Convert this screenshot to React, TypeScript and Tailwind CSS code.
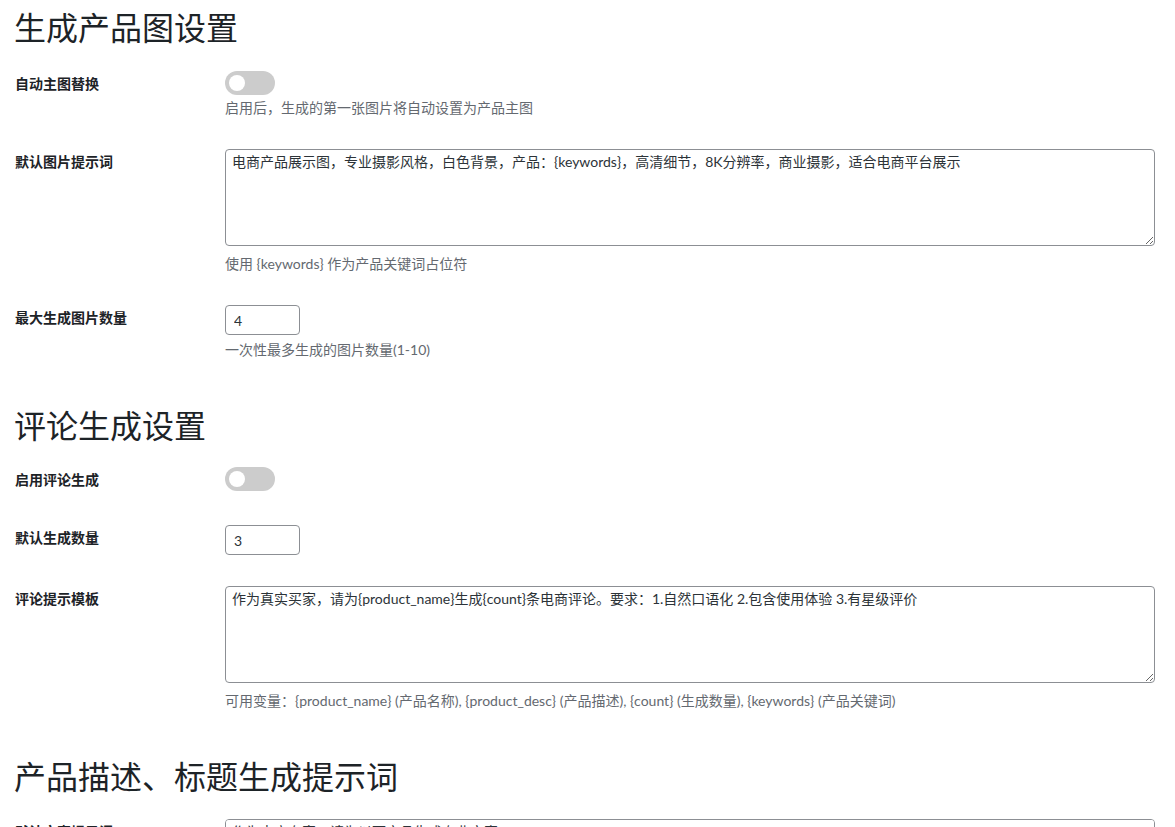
import React from "react";

const font = { fontFamily: 'Lato, "Noto Sans CJK SC", sans-serif' };

function Toggle() {
  return (
    <span className="relative inline-block w-[50px] h-[24px] rounded-full bg-[#cccccc]">
      <span className="absolute left-[4px] top-[4px] w-[16px] h-[16px] rounded-full bg-white" />
    </span>
  );
}

function Row({ label, children, desc, descGap = "mt-[4px]" }: { label: string; children: React.ReactNode; desc?: string; descGap?: string }) {
  return (
    <div className="flex">
      <div className="w-[210px] shrink-0 pt-[20px] pb-[20px] text-[14px] leading-[18px] font-semibold text-[#1d2327]">{label}</div>
      <div className="flex-1 py-[15px]">
        <div className="flex pt-[1px]">{children}</div>
        {desc && <p className={`${descGap} text-[14px] leading-[20px] text-[#646970]`}>{desc}</p>}
      </div>
    </div>
  );
}

function Area({ value, scroll }: { value: string; scroll?: boolean }) {
  return (
    <textarea
      defaultValue={value}
      className={`w-full h-[97px] border border-[#8c8f94] rounded-[4px] px-[6px] py-[2px] text-[14px] leading-[20px] text-[#2c3338] bg-white outline-none ${scroll ? "overflow-y-scroll" : ""}`}
      style={font}
    />
  );
}

function NumInput({ value }: { value: string }) {
  return (
    <input
      type="text"
      defaultValue={value}
      className="w-[75px] h-[30px] border border-[#8c8f94] rounded-[4px] px-[8px] text-[14px] text-[#2c3338] bg-white outline-none"
      style={font}
    />
  );
}

export default function App() {
  return (
    <div className="bg-white min-h-screen pl-[15px] pr-[20px] text-[#3c434a]" style={font}>
      <h2 className="pt-[7px] mb-[6px] text-[32px] leading-[42px] font-normal text-[#1d2327] -ml-[1px]">生成产品图设置</h2>
      <Row label="自动主图替换" desc="启用后，生成的第一张图片将自动设置为产品主图" descGap="mt-[3px]">
        <Toggle />
      </Row>
      <Row label="默认图片提示词" desc="使用 {keywords} 作为产品关键词占位符" descGap="mt-[8px]">
        <Area value="电商产品展示图，专业摄影风格，白色背景，产品：{keywords}，高清细节，8K分辨率，商业摄影，适合电商平台展示" />
      </Row>
      <Row label="最大生成图片数量" desc="一次性最多生成的图片数量(1-10)" descGap="mt-[5px]">
        <NumInput value="4" />
      </Row>

      <h2 className="mt-[30px] mb-[4px] text-[32px] leading-[42px] font-normal text-[#1d2327] -ml-[1px]">评论生成设置</h2>
      <Row label="启用评论生成">
        <Toggle />
      </Row>
      <Row label="默认生成数量">
        <NumInput value="3" />
      </Row>
      <Row
        label="评论提示模板"
        desc="可用变量：{product_name} (产品名称), {product_desc} (产品描述), {count} (生成数量), {keywords} (产品关键词)"
        descGap="mt-[8px]"
      >
        <Area value="作为真实买家，请为{product_name}生成{count}条电商评论。要求：1.自然口语化 2.包含使用体验 3.有星级评价" />
      </Row>

      <h2 className="mt-[30px] mb-[5px] text-[32px] leading-[42px] font-normal text-[#1d2327] -ml-[1px]">产品描述、标题生成提示词</h2>
      <Row label="默认文案提示词">
        <Area
          scroll
          value={"作为电商专家，请为以下产品生成专业文案：\n产品名称：{product_name}\n产品描述：{product_desc}\n关键词：{keywords}\n要求：\n1.生成吸引人的产品标题\n2.生成详细的产品描述\n3.突出产品卖点"}
        />
      </Row>
    </div>
  );
}
